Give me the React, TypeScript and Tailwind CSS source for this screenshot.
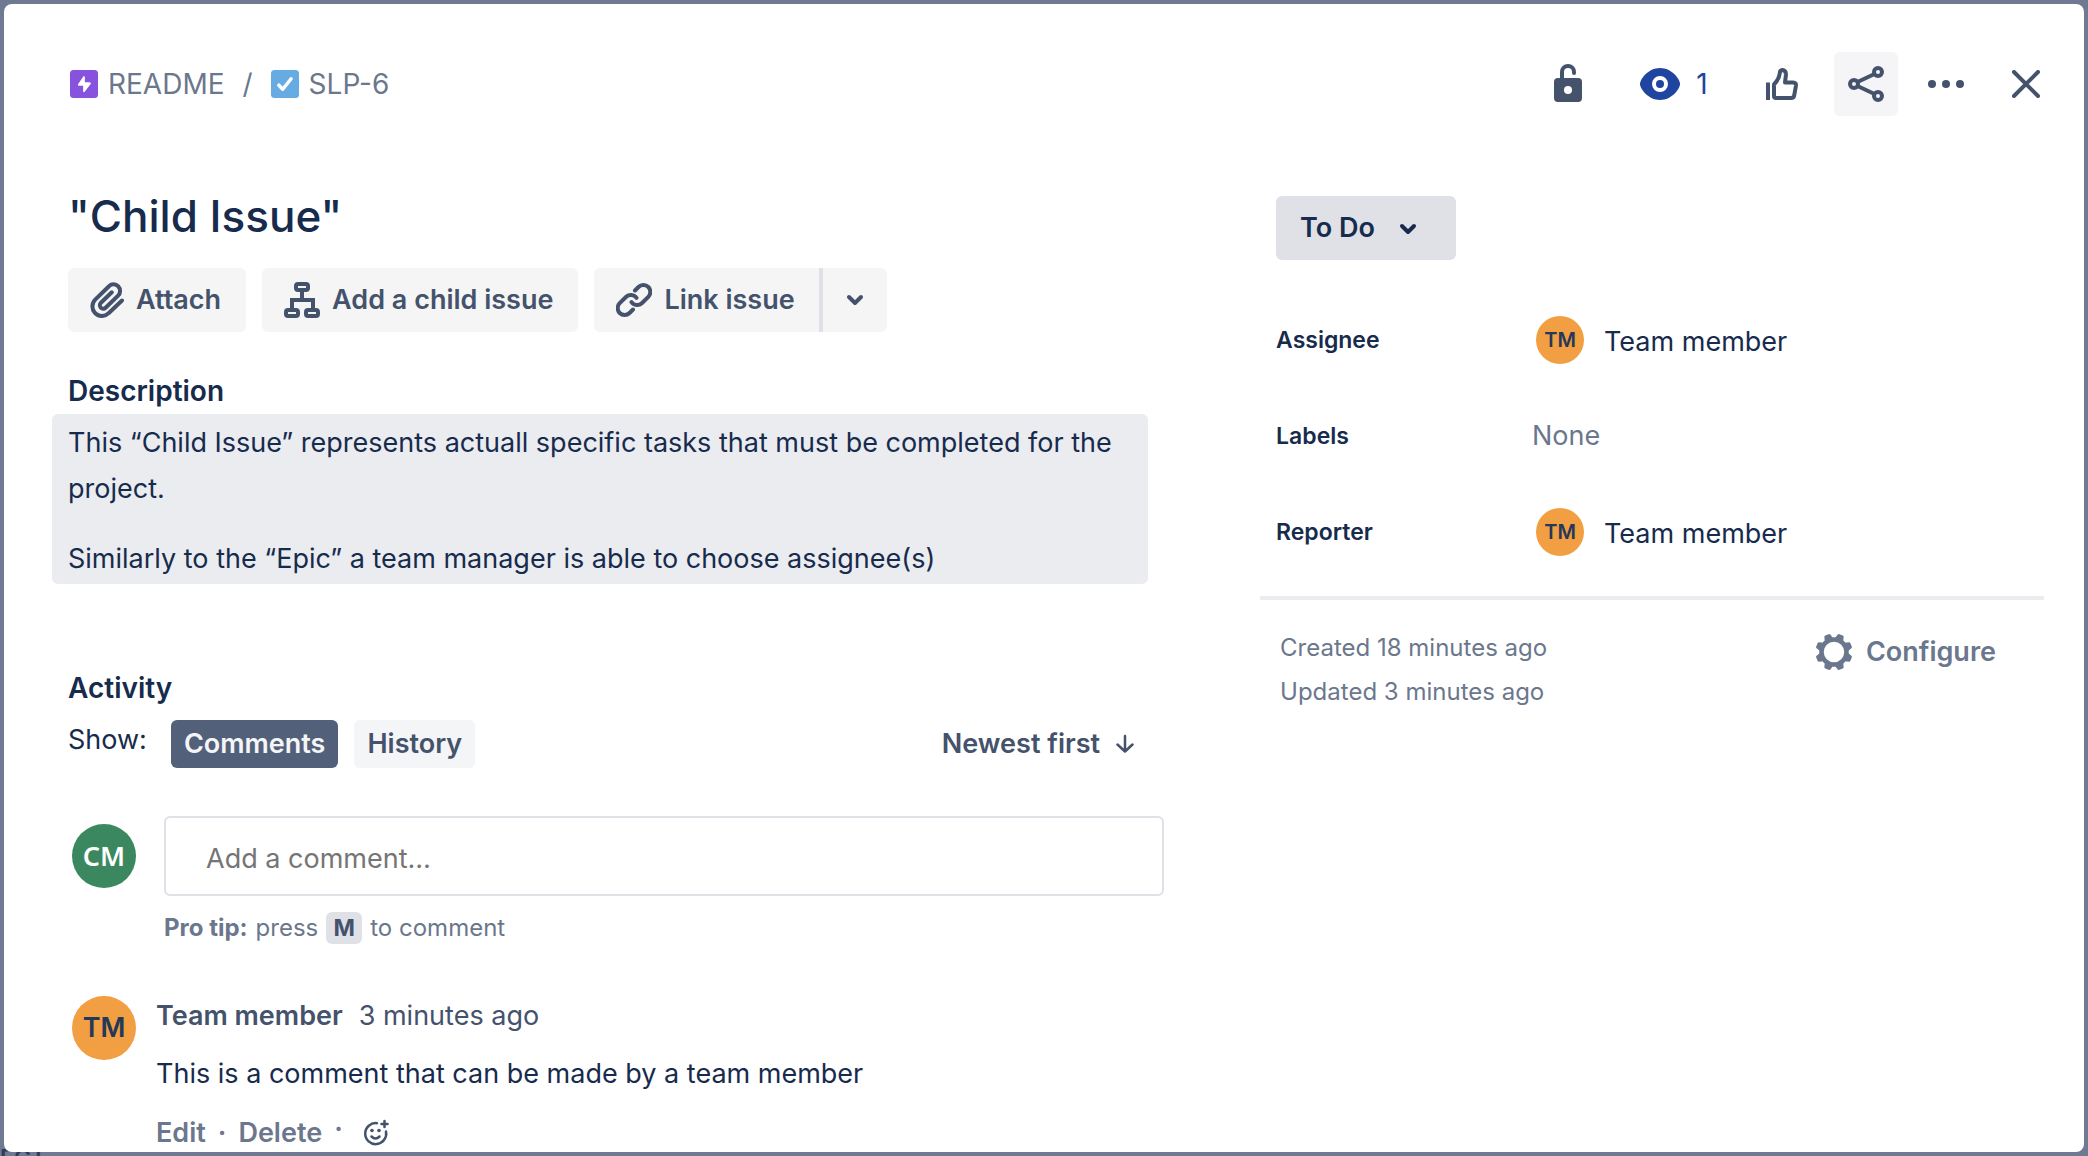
import React from "react";

function EpicIcon() {
  return (
    <svg width="28" height="28" viewBox="0 0 16 16" aria-hidden="true">
      <rect width="16" height="16" rx="2" fill="#8752dd" />
      <path
        d="M11.5 7.300a.5.5 0 0 0-.4-.3H8.500V4a.5.5 0 0 0-.4-.5.5.5 0 0 0-.5.2L4.600 8.200a.5.5 0 0 0 0 .5.5.5 0 0 0 .4.3h2.500v3.200a.5.5 0 0 0 .4.5h.1a.5.5 0 0 0 .4-.3l3.500-4.600a.5.5 0 0 0 0-.5z"
        fill="#fff"
      />
    </svg>
  );
}

function TaskIcon() {
  return (
    <svg width="28" height="28" viewBox="0 0 16 16" aria-hidden="true">
      <rect width="16" height="16" rx="2" fill="#67abe3" />
      <path d="M4.500 8.700 6.700 11 11.500 5" fill="none" stroke="#fff" strokeWidth="2" strokeLinecap="round" strokeLinejoin="round" />
    </svg>
  );
}

function UnlockIcon() {
  return (
    <svg width="48" height="48" viewBox="0 0 48 48" aria-hidden="true">
      <path d="M18 22V12a6 6 0 0 1 12 0v1" fill="none" stroke="currentColor" strokeWidth="4" strokeLinecap="round" />
      <rect x="10" y="18" width="28" height="24" rx="4" fill="currentColor" />
      <circle cx="24" cy="30" r="4" fill="#fff" />
    </svg>
  );
}

function EyeIcon() {
  return (
    <svg width="40" height="40" viewBox="0 0 40 40" aria-hidden="true">
      <path d="M20 4C8 4 0 15.500 0 20s8 16 20 16 20-11.500 20-16S32 4 20 4z" fill="currentColor" />
      <circle cx="20" cy="20" r="6" fill="none" stroke="#fff" strokeWidth="4" />
    </svg>
  );
}

function ThumbIcon() {
  return (
    <svg width="32" height="32" viewBox="0 0 32 32" fill="none" stroke="currentColor" strokeWidth="4" strokeLinecap="square" strokeLinejoin="round" aria-hidden="true">
      <path d="M2 16.500v13.500" />
      <path d="M8 16.500v11.500q0 2 2 2h15q2.800 0 3.200-2.600l1.700-9.400q.5-3.500-2.900-3.500h-8l.9-7.500q.3-4.500-3.200-5-2.700 0-2.900 3-.5 6-5.800 11.500z" />
    </svg>
  );
}

function ShareIcon() {
  return (
    <svg width="36" height="36" viewBox="0 0 36 36" fill="none" stroke="currentColor" strokeWidth="4" aria-hidden="true">
      <circle cx="6" cy="18" r="4" />
      <circle cx="30" cy="6" r="4" />
      <circle cx="30" cy="30" r="4" />
      <path d="M9.500 16 26.500 8M9.500 20l17 8" />
    </svg>
  );
}

function DotsIcon() {
  return (
    <svg width="36" height="8" viewBox="0 0 36 8" fill="currentColor" aria-hidden="true">
      <circle cx="4" cy="4" r="4" />
      <circle cx="18" cy="4" r="4" />
      <circle cx="32" cy="4" r="4" />
    </svg>
  );
}

function CloseIcon() {
  return (
    <svg width="28" height="28" viewBox="0 0 28 28" stroke="currentColor" strokeWidth="4" strokeLinecap="round" aria-hidden="true">
      <path d="m2 2 24 24M26 2 2 26" />
    </svg>
  );
}

function ClipIcon() {
  return (
    <svg width="34" height="36" viewBox="0 0 34 36" fill="none" stroke="currentColor" strokeWidth="4" strokeLinecap="round" strokeLinejoin="round" aria-hidden="true">
      <path d="M32 18.500 18.600 31.200a9.400 9.400 0 0 1-13.700-.3 9.700 9.700 0 0 1 .3-13.300L19 4.200a6.500 6.500 0 0 1 9.300.2 6.700 6.700 0 0 1-.2 9.300L15.600 25.800a3.400 3.400 0 0 1-4.800-.1 3.500 3.500 0 0 1 .1-4.900l10.900-10.500" />
    </svg>
  );
}

function TreeIcon() {
  return (
    <svg width="36" height="36" viewBox="0 0 36 36" fill="none" stroke="currentColor" strokeWidth="4" aria-hidden="true">
      <rect x="12" y="2" width="12" height="6" rx="2" />
      <rect x="2" y="28" width="12" height="6" rx="2" />
      <rect x="22" y="28" width="12" height="6" rx="2" />
      <path d="M18 9v9M8 27v-9h21v9" />
    </svg>
  );
}

function ChainIcon() {
  return (
    <svg width="36" height="34" viewBox="0 0 36 34" fill="none" stroke="currentColor" strokeWidth="4" strokeLinecap="round" aria-hidden="true">
      <path d="M19 7.500 22.500 4a7 7 0 0 1 9.800 0 7 7 0 0 1 0 9.800l-6.500 6.400a6.800 6.800 0 0 1-10.300-1" />
      <path d="M17 26.500 13.500 30a7 7 0 0 1-9.800 0 7 7 0 0 1 0-9.800l6.500-6.400a6.800 6.800 0 0 1 10.300 1" />
    </svg>
  );
}

function Chevron() {
  return (
    <svg width="18" height="12" viewBox="0 0 18 12" fill="none" stroke="currentColor" strokeWidth="4" strokeLinecap="round" strokeLinejoin="round" aria-hidden="true">
      <path d="m3 3 6 6 6-6" />
    </svg>
  );
}

function DownArrow() {
  return (
    <svg width="18" height="20" viewBox="0 0 18 20" fill="none" stroke="currentColor" strokeWidth="2.500" strokeLinecap="round" strokeLinejoin="round" aria-hidden="true">
      <path d="M9 2v15.500M1.500 10.500 9 17.500l7.500-7" />
    </svg>
  );
}

function GearIcon() {
  const teeth = [22.5, 67.5, 112.5, 157.5, 202.5, 247.5, 292.5, 337.5];
  return (
    <svg width="36" height="36" viewBox="-18 -18 36 36" aria-hidden="true">
      <circle r="12.500" fill="none" stroke="currentColor" strokeWidth="4.500" />
      {teeth.map((a) => (
        <path key={a} d="M-4.500-13-3.200-17.500q.4-1 1.400-1h3.600q1 0 1.400 1l1.300 4.500z" fill="currentColor" transform={`rotate(${a})`} />
      ))}
    </svg>
  );
}

function EmojiIcon() {
  return (
    <svg width="26" height="28" viewBox="0 0 26 28" fill="none" stroke="currentColor" strokeLinecap="round" aria-hidden="true">
      <path d="M14 4.200A10.500 10.500 0 1 0 23 12.500" strokeWidth="2.500" />
      <path d="M8.500 17.500q4 4 8 0" strokeWidth="2.500" />
      <circle cx="9" cy="11.500" r="1.800" fill="currentColor" stroke="none" />
      <circle cx="16" cy="11.500" r="1.800" fill="currentColor" stroke="none" />
      <path d="M21.500 2v6M18.500 5h6" strokeWidth="2.500" />
    </svg>
  );
}

const iconButton = "flex size-16 items-center justify-center rounded-md";
const grayButton = "flex h-16 items-center rounded-md bg-[#f5f5f6] font-semibold text-[#44526c]";

function Person({ name }: { name: string }) {
  return (
    <div className="flex items-center gap-5 pl-1">
      <span className="flex size-12 items-center justify-center rounded-full bg-[#f19f42] text-[20px] leading-6 font-semibold text-[#253858]">TM</span>
      <span className="pt-1">{name}</span>
    </div>
  );
}

export default function App() {
  return (
    <div className="relative flex min-h-screen overflow-hidden bg-[#6f7a92] p-1 font-['Inter',sans-serif] text-[27px] leading-[46px] text-[#172b4d]">
      <span aria-hidden="true" className="absolute -bottom-[14px] left-0 text-[23px] leading-6 font-semibold text-[#2c3c61]">ECT</span>
      <main role="dialog" aria-label="Child Issue" className="relative flex-1 rounded-lg bg-white pt-12 pr-10 pl-12">
        <header className="flex h-16 items-center justify-between">
          <nav aria-label="Breadcrumb" className="flex items-center pl-[18px] text-[28px] text-[#6b778c]">
            <a href="#readme" className="flex items-center gap-[10px]">
              <EpicIcon />
              README
            </a>
            <span className="px-[18px]">/</span>
            <a href="#slp-6" className="flex items-center gap-[10px]">
              <TaskIcon />
              SLP-6
            </a>
          </nav>
          <div className="flex items-center text-[#44526c]">
            <button aria-label="Restrict access" className={iconButton}><UnlockIcon /></button>
            <button aria-label="Watchers" className="mr-6 ml-[22px] flex h-16 w-[104px] items-center justify-center gap-4 text-[28px] text-[#1f45a0]">
              <EyeIcon />
              1
            </button>
            <button aria-label="Vote" className={iconButton}><ThumbIcon /></button>
            <button aria-label="Share" className={`${iconButton} mr-4 ml-5 bg-[#f5f5f7]`}><ShareIcon /></button>
            <button aria-label="More actions" className={iconButton}><DotsIcon /></button>
            <button aria-label="Close" className={`${iconButton} -mr-[14px] ml-4`}><CloseIcon /></button>
          </div>
        </header>

        <div className="grid grid-cols-[61fr_43fr] gap-24 pt-[68px]">
          <section className="pl-4">
            <h1 className="text-[44px] leading-[64px] font-medium">"Child Issue"</h1>
            <div className="mt-5 flex gap-4">
              <button className={`${grayButton} gap-3 pr-[25px] pl-[22px]`}><ClipIcon />Attach</button>
              <button className={`${grayButton} gap-3 pr-[25px] pl-[22px]`}><TreeIcon />Add a child issue</button>
              <div className="flex">
                <button className={`${grayButton} gap-3 rounded-r-none pr-6 pl-[22px]`}><ChainIcon />Link issue</button>
                <button aria-label="More link options" className={`${grayButton} w-[68px] justify-center rounded-l-none border-l-4 border-[#dfe1e6]`}><Chevron /></button>
              </div>
            </div>

            <h2 className="mt-9 text-[28px] font-semibold">Description</h2>
            <div className="mr-4 -ml-4 rounded-md bg-[#ebecf0] px-4 pt-[6px] pb-[2px]">
              <p>This “Child Issue” represents actuall specific tasks that must be completed for the project.</p>
              <p className="mt-6">Similarly to the “Epic” a team manager is able to choose assignee(s)</p>
            </div>

            <h2 className="mt-[81px] text-[28px] font-semibold">Activity</h2>
            <div className="mt-[9px] flex h-12 items-center justify-between pr-[30px]">
              <div className="flex items-center gap-4">
                <span className="mr-2 pb-2">Show:</span>
                <button className="h-12 rounded-md bg-[#536079] px-[13px] font-semibold text-[#f4f5f7]">Comments</button>
                <button className="h-12 rounded-md bg-[#f4f5f7] px-[13px] font-semibold text-[#44526c]">History</button>
              </div>
              <button className="flex items-center gap-4 font-semibold text-[#44526c]">Newest first <DownArrow /></button>
            </div>

            <div className="mt-12 flex gap-7 pl-1">
              <span className="mt-2 flex size-16 shrink-0 items-center justify-center rounded-full bg-[#3b875f] font-['Noto_Sans',sans-serif] font-semibold text-white">CM</span>
              <div className="flex-1">
                <input aria-label="Add a comment" placeholder="Add a comment…" className="block h-20 w-full rounded-md border-2 border-[#dfe1e6] px-10 pt-1 placeholder:text-[#757575]" />
                <p className="mt-4 flex h-8 items-center text-[24px] leading-8 text-[#6b778c]">
                  <strong className="mr-2 font-bold">Pro tip:</strong>
                  press
                  <kbd className="mx-2 flex h-8 w-9 items-center justify-center rounded-md bg-[#dfe1e6] font-['Inter',sans-serif] text-[23px] font-bold text-[#44526c]">M</kbd>
                  to comment
                </p>
              </div>
            </div>

            <article className="mt-12 flex gap-5 pl-1">
              <span className="mt-1 flex size-16 shrink-0 items-center justify-center rounded-full bg-[#f19f42] font-semibold text-[#253858]">TM</span>
              <div className="flex-1 text-[#44526c]">
                <p className="mt-px flex gap-4"><span className="font-semibold">Team member</span><span>3 minutes ago</span></p>
                <p className="mt-3 text-[#172b4d]">This is a comment that can be made by a team member</p>
                <div className="mt-5 flex h-8 items-center gap-3 leading-8 font-semibold text-[#6b778c]">
                  <button>Edit</button>
                  <span>·</span>
                  <button>Delete</button>
                  <span className="pb-2">·</span>
                  <button aria-label="Add reaction" className="ml-2 text-[#44526c]"><EmojiIcon /></button>
                </div>
              </div>
            </article>
          </section>

          <aside className="pt-3">
            <div className="relative ml-4 w-[180px]">
              <select aria-label="Status" className="h-16 w-full appearance-none rounded-md bg-[#dfe1e6] pl-6 font-semibold">
                <option>To Do</option>
              </select>
              <span className="pointer-events-none absolute top-[27px] left-[123px]"><Chevron /></span>
            </div>
            <dl className="mt-8 grid grid-cols-[1fr_2fr] items-center pl-4 [&>dd]:flex [&>dd]:h-24 [&>dd]:items-center [&>dt]:text-[23px] [&>dt]:font-semibold">
              <dt>Assignee</dt>
              <dd><Person name="Team member" /></dd>
              <dt>Labels</dt>
              <dd className="text-[#6b778c]">None</dd>
              <dt>Reporter</dt>
              <dd><Person name="Team member" /></dd>
            </dl>
            <div className="mt-4 flex justify-between border-t-4 border-[#ebecf0] pt-[26px] pr-12 pl-5 text-[#6b778c]">
              <div className="text-[24px] leading-[44px]">
                <p>Created 18 minutes ago</p>
                <p>Updated 3 minutes ago</p>
              </div>
              <button className="mt-1 flex h-[44px] items-center gap-[14px] font-semibold"><GearIcon />Configure</button>
            </div>
          </aside>
        </div>
      </main>
    </div>
  );
}
